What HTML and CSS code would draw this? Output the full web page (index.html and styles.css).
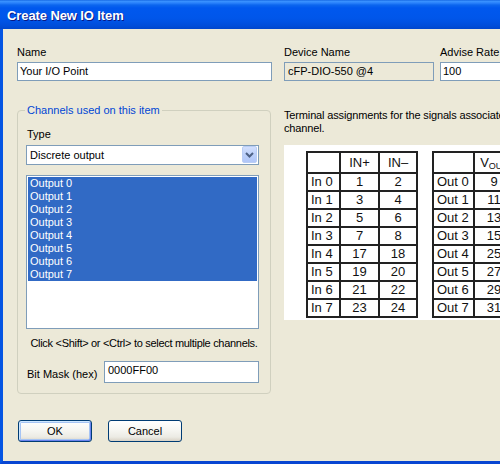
FILE: index.html
```html
<!DOCTYPE html>
<html>
<head>
<meta charset="utf-8">
<link rel="stylesheet" href="styles.css">
</head>
<body>
<div class="window">
  <div class="titlebar"><span>Create New IO Item</span></div>
  <div class="body">
    <div class="top-row">
      <div class="field f-name">
        <div class="label">Name</div>
        <div class="edit">Your I/O Point</div>
      </div>
      <div class="field f-dev">
        <div class="label">Device Name</div>
        <div class="edit ro">cFP-DIO-550 @4</div>
      </div>
      <div class="field f-rate">
        <div class="label">Advise Rate</div>
        <div class="edit">100</div>
      </div>
    </div>
    <div class="mid-row">
      <fieldset class="group">
        <legend>Channels used on this item</legend>
        <div class="type-label">Type</div>
        <div class="combo">
          <span class="combo-text">Discrete output</span>
          <span class="combo-btn">
            <svg width="9" height="6" viewBox="0 0 9 6"><path d="M1 1 L4.5 4.5 L8 1" fill="none" stroke="#4D6185" stroke-width="2"/></svg>
          </span>
        </div>
        <div class="list">
          <div class="item sel">Output 0</div>
          <div class="item sel">Output 1</div>
          <div class="item sel">Output 2</div>
          <div class="item sel">Output 3</div>
          <div class="item sel">Output 4</div>
          <div class="item sel">Output 5</div>
          <div class="item sel">Output 6</div>
          <div class="item sel">Output 7</div>
        </div>
        <div class="hint">Click &lt;Shift&gt; or &lt;Ctrl&gt; to select multiple channels.</div>
        <div class="mask-row">
          <div class="mask-label">Bit Mask (hex)</div>
          <div class="edit mask">0000FF00</div>
        </div>
      </fieldset>
      <div class="terminal">
        <div class="term-text">Terminal assignments for the signals associated with this<br>channel.</div>
        <div class="diagram">
          <table class="tt t1">
            <tr class="hd"><td class="c1"></td><td class="c2">IN+</td><td class="c3">IN–</td></tr>
            <tr><td class="lbl">In 0</td><td>1</td><td>2</td></tr>
            <tr><td class="lbl">In 1</td><td>3</td><td>4</td></tr>
            <tr><td class="lbl">In 2</td><td>5</td><td>6</td></tr>
            <tr><td class="lbl">In 3</td><td>7</td><td>8</td></tr>
            <tr><td class="lbl">In 4</td><td>17</td><td>18</td></tr>
            <tr><td class="lbl">In 5</td><td>19</td><td>20</td></tr>
            <tr><td class="lbl">In 6</td><td>21</td><td>22</td></tr>
            <tr><td class="lbl">In 7</td><td>23</td><td>24</td></tr>
          </table>
          <table class="tt t2">
            <tr class="hd"><td class="d1"></td><td class="d2">V<span class="sub">OUT</span></td></tr>
            <tr><td class="lbl">Out 0</td><td>9</td></tr>
            <tr><td class="lbl">Out 1</td><td>11</td></tr>
            <tr><td class="lbl">Out 2</td><td>13</td></tr>
            <tr><td class="lbl">Out 3</td><td>15</td></tr>
            <tr><td class="lbl">Out 4</td><td>25</td></tr>
            <tr><td class="lbl">Out 5</td><td>27</td></tr>
            <tr><td class="lbl">Out 6</td><td>29</td></tr>
            <tr><td class="lbl">Out 7</td><td>31</td></tr>
          </table>
        </div>
      </div>
    </div>
    <div class="buttons">
      <div class="btn def">OK</div>
      <div class="btn">Cancel</div>
    </div>
  </div>
</div>
</body>
</html>
```
FILE: styles.css
```css
html, body {
  margin: 0;
  padding: 0;
  background: #ECE9D8;
}
body {
  font: 11px "Liberation Sans", Arial, sans-serif;
  color: #000;
}
.window {
  width: 500px;
  height: 464px;
  overflow: hidden;
  background: #ECE9D8;
  display: flex;
  flex-direction: column;
}
.titlebar {
  height: 29px;
  flex: none;
  box-sizing: border-box;
  padding: 2px 0 0 7px;
  display: flex;
  align-items: center;
  color: #fff;
  font: bold 13px "Liberation Sans", Arial, sans-serif;
  letter-spacing: -0.1px;
  text-shadow: 1px 1px #0A1883;
  background: linear-gradient(to bottom, #0A5BDC 0px, #3D95FF 1px, #2A82FB 3px, #0C66EE 5px, #0058EE 8px, #0056EA 18px, #0052E3 22px, #004DD9 26px, #0046CC 29px);
}
.body {
  flex: 1;
  border-left: 3px solid #0555E3;
  border-bottom: 3px solid #0846D2;
  padding: 17px 0 0 14px;
}
.top-row {
  display: flex;
}
.field {
  flex: none;
}
.f-name { width: 255px; margin-right: 12px; }
.f-dev { width: 150px; margin-right: 6px; }
.f-rate { width: 80px; }
.label {
  line-height: 13px;
  margin-bottom: 3px;
  white-space: nowrap;
}
.edit {
  height: 19px;
  box-sizing: border-box;
  border: 1px solid #7F9DB9;
  background: #fff;
  padding: 0 2px;
  line-height: 17px;
  white-space: nowrap;
}
.edit.ro {
  background: #ECE9D8;
  padding-left: 3px;
}
.mid-row {
  display: flex;
  align-items: flex-start;
  margin-top: 23px;
}
.group {
  flex: none;
  width: 254px;
  box-sizing: border-box;
  margin: 0;
  min-width: 0;
  border: 1px solid #D0D0BF;
  border-radius: 4px;
  padding: 11px 11px 10px 8px;
}
.group legend {
  color: #0046D5;
  line-height: 13px;
  padding: 0 2px;
  margin-left: -1px;
}
.type-label {
  line-height: 13px;
  margin-bottom: 4px;
  padding-left: 1px;
}
.combo {
  height: 20px;
  box-sizing: border-box;
  border: 1px solid #7F9DB9;
  background: #fff;
  display: flex;
  align-items: stretch;
}
.combo-text {
  flex: 1;
  padding-left: 3px;
  line-height: 18px;
}
.combo-btn {
  width: 15px;
  margin: 0 1px 1px 0;
  box-sizing: border-box;
  border: 1px solid #B9CDF5;
  border-radius: 2px;
  background: linear-gradient(to bottom, #D2DFFD 0%, #BCD0FA 50%, #B0C6F8 100%);
  display: flex;
  align-items: center;
  justify-content: center;
}
.list {
  margin-top: 10px;
  height: 154px;
  box-sizing: border-box;
  border: 1px solid #7F9DB9;
  background: #fff;
  padding: 1px;
}
.item {
  line-height: 13px;
  padding-left: 2px;
  white-space: nowrap;
}
.item.sel {
  background: #316AC5;
  color: #fff;
}
.hint {
  margin-top: 8px;
  line-height: 13px;
  text-align: center;
  white-space: nowrap;
  letter-spacing: -0.3px;
  padding-left: 3px;
}
.mask-row {
  display: flex;
  align-items: flex-start;
  margin-top: 11px;
}
.mask-label {
  width: 77px;
  padding-left: 1px;
  margin-top: 7px;
  line-height: 13px;
  white-space: nowrap;
}
.edit.mask {
  flex: 1;
  height: 22px;
  line-height: 13px;
  padding: 2px 3px 0;
}
.terminal {
  flex: none;
  width: 260px;
  margin-left: 13px;
  margin-top: 5px;
}
.term-text {
  line-height: 13px;
  white-space: nowrap;
  letter-spacing: -0.15px;
}
.diagram {
  margin-top: 10px;
  height: 175px;
  box-sizing: border-box;
  background: #fff;
  padding: 6px 0 0 22px;
  display: flex;
  align-items: flex-start;
  gap: 14px;
}
.tt {
  flex: none;
  border-collapse: separate;
  border-spacing: 0;
  border-top: 2px solid #222;
  border-left: 2px solid #222;
  font: 13px "Liberation Sans", Arial, sans-serif;
  color: #111;
}
.tt td {
  border-right: 2px solid #222;
  border-bottom: 2px solid #222;
  padding: 0;
  line-height: 16px;
  text-align: center;
  white-space: nowrap;
}
.tt tr.hd td {
  line-height: 19px;
}
.tt td.lbl {
  text-align: left;
  padding-left: 3px;
}
.t1 .c1 { width: 31px; }
.t1 .c2 { width: 37px; }
.t1 .c3 { width: 36px; }
.t2 .d1 { width: 39px; }
.t2 .d2 { width: 38px; }
.sub {
  font-size: 9px;
  line-height: 0;
  vertical-align: -2px;
}
.buttons {
  display: flex;
  gap: 16px;
  margin: 26px 0 0 1px;
}
.btn {
  width: 74px;
  height: 22px;
  box-sizing: border-box;
  border: 1px solid #003C74;
  border-radius: 3px;
  background: linear-gradient(to bottom, #FFFFFF 0%, #F6F6F2 45%, #ECEBE4 80%, #D8D2C6 100%);
  display: flex;
  align-items: center;
  justify-content: center;
  line-height: 13px;
}
.btn.def {
  box-shadow: inset 1px 1px 0 #CEE7FF, inset -1px -1px 0 #6982EE, inset 0 0 0 2px #A6C4F4;
}
```
